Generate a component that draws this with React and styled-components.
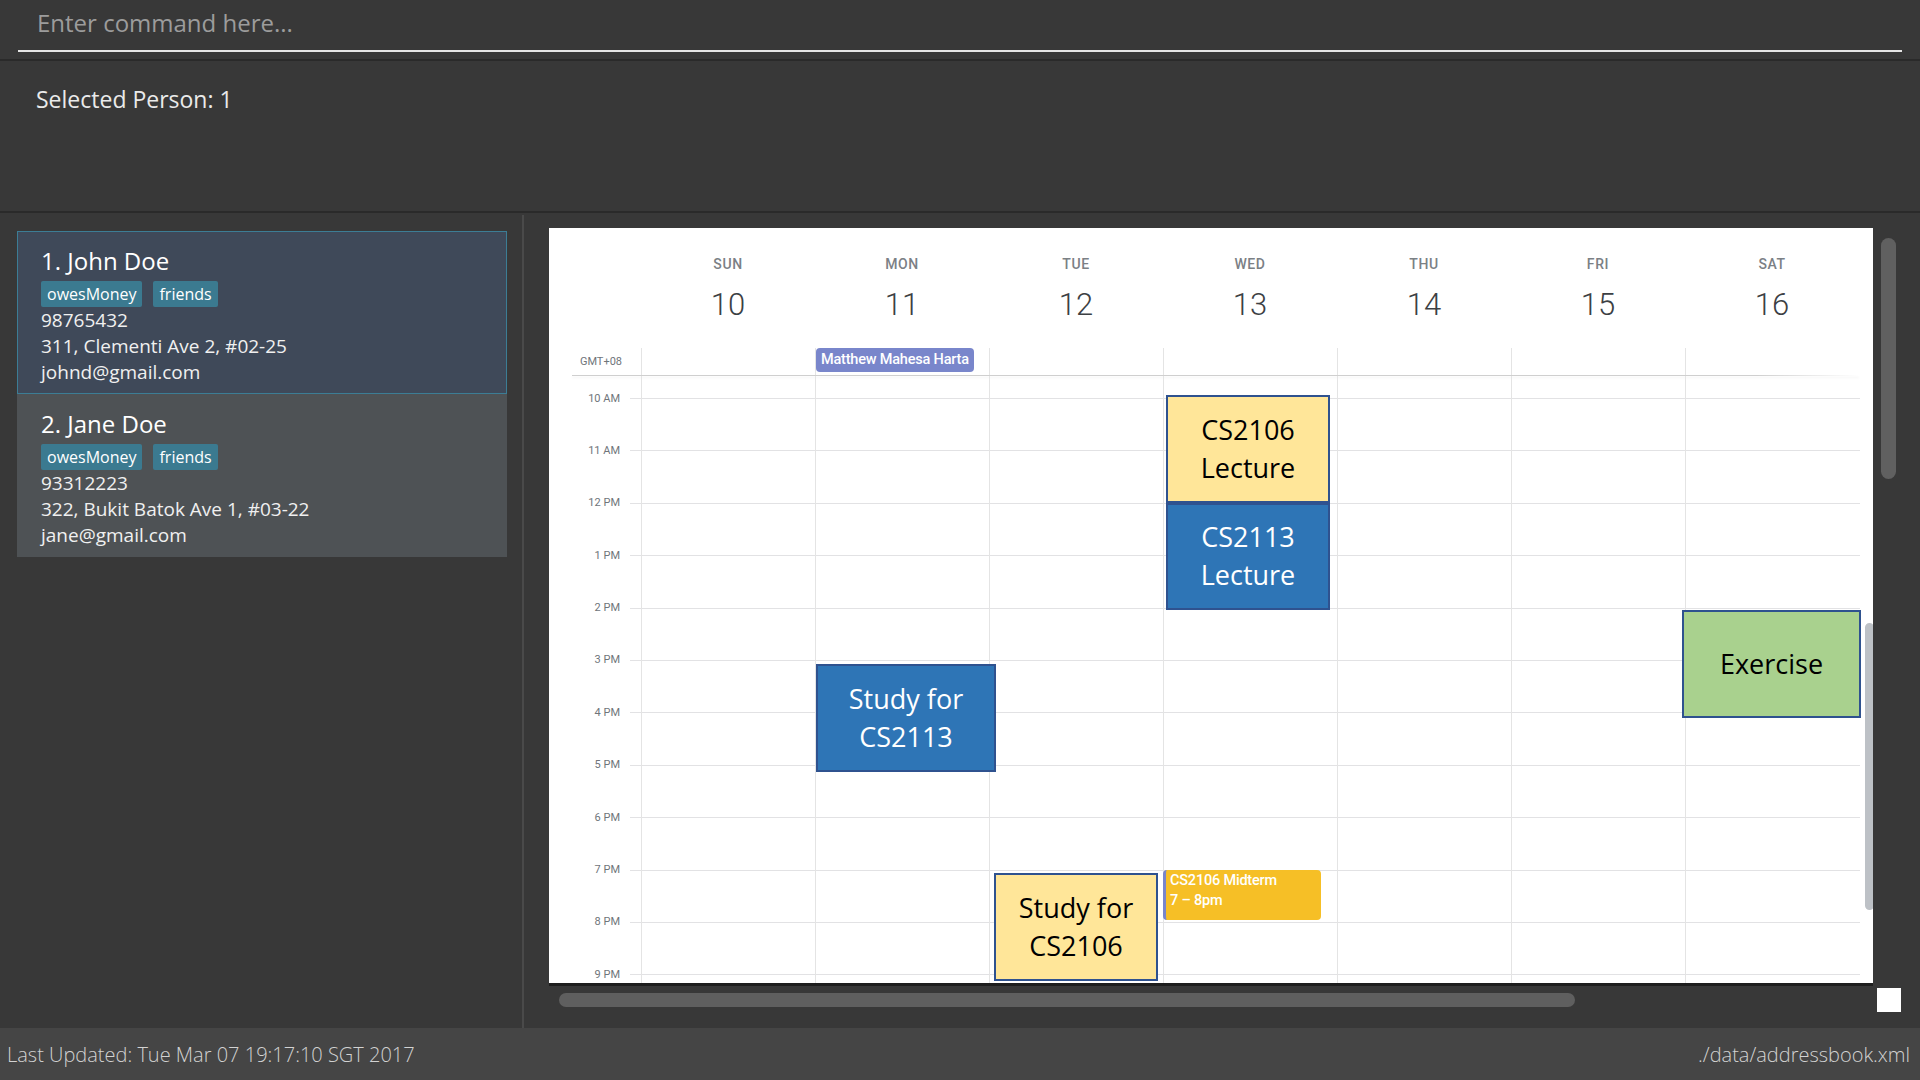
import React from 'react'
import styled, { createGlobalStyle } from 'styled-components'

const HOUR = 52.4
const FIRST_LINE = 22

const GlobalStyle = createGlobalStyle`
  body {
    margin: 0;
    background: #383838;
    font-family: "Open Sans", "Noto Sans", sans-serif;
    overflow: hidden;
  }
`

const Window = styled.div`
  display: flex;
  flex-direction: column;
  width: 1920px;
  height: 1080px;
  background: #383838;
`

const CommandBar = styled.div`
  height: 59px;
  padding: 0 18px;
  border-bottom: 2px solid #2a2a2a;
`

const CommandInput = styled.input`
  display: block;
  box-sizing: border-box;
  width: 100%;
  height: 52px;
  padding: 6px 19px 12px;
  border: none;
  border-bottom: 2px solid #e6e6e6;
  background: transparent;
  font-family: "Open Sans", sans-serif;
  font-size: 24px;
  line-height: 32px;
  color: #eee;
  outline: none;

  &::placeholder {
    color: #9c9c9c;
  }
`

const ResultBox = styled.div`
  height: 152px;
  box-sizing: border-box;
  padding: 22px 36px;
  border-bottom: 2px solid #2a2a2a;
  font-size: 23px;
  line-height: 32px;
  color: #eaeaea;
`

const Main = styled.div`
  display: flex;
  flex: 1;
  min-height: 0;
`

const PersonPane = styled.div`
  width: 524px;
  box-sizing: border-box;
  padding: 16px 16px 0 17px;
  border-right: 2px solid #4a4a4a;
  margin-top: 2px;
`

const Card = styled.div`
  width: 490px;
  box-sizing: border-box;
  padding: 13px 23px 8px;
  border: 1px solid ${(p) => (p.$selected ? '#3c7d95' : 'transparent')};
  background: ${(p) => (p.$selected ? '#3f4959' : '#4e5255')};
  color: #f2f2f2;
`

const Name = styled.div`
  font-size: 24px;
  line-height: 32px;
  color: #fff;
`

const Tags = styled.div`
  display: flex;
  gap: 11px;
  margin-top: 4px;
`

const Tag = styled.span`
  padding: 0 6px;
  border-radius: 2px;
  background: #3b7a90;
  font-size: 16px;
  line-height: 26px;
  color: #fff;
`

const Field = styled.div`
  font-size: 19px;
  line-height: 26px;
  color: #f0f0f0;
`

const CalendarPane = styled.div`
  flex: 1;
  display: grid;
  grid-template-columns: 1324px 1fr;
  grid-template-rows: 755px auto;
  padding: 15px 0 0 25px;
`

const Calendar = styled.div`
  position: relative;
  background: #fff;
  overflow: hidden;
  box-shadow: 0 3px 0 #1e1e1e;
  font-family: Roboto, "Noto Sans", sans-serif;
`

const HeaderRow = styled.div`
  display: grid;
  grid-template-columns: 92px repeat(7, 174px);
  padding-top: 28px;
`

const DayHead = styled.div`
  grid-column: ${(p) => p.$col};
  display: flex;
  flex-direction: column;
  align-items: center;
`

const DayName = styled.div`
  font-size: 14px;
  line-height: 16px;
  font-weight: 500;
  letter-spacing: 0.6px;
  color: #7b8085;
`

const DayNumber = styled.div`
  margin-top: 15px;
  font-size: 31px;
  line-height: 36px;
  font-weight: 300;
  color: #3c4043;
`

const AllDayRow = styled.div`
  display: grid;
  grid-template-columns: 92px repeat(7, 174px);
  height: 27px;
  margin-top: 25px;
`

const GmtLabel = styled.div`
  display: flex;
  align-items: center;
  justify-content: flex-end;
  padding-right: 19px;
  font-size: 11px;
  color: #70757a;
`

const AllDayCell = styled.div`
  border-left: 1px solid #e4e4e4;
`

const AllDayChip = styled.div`
  width: 158px;
  height: 24px;
  box-sizing: border-box;
  padding-left: 5px;
  border-radius: 4px;
  background: #7986cb;
  font-size: 14.5px;
  font-weight: 500;
  line-height: 24px;
  letter-spacing: -0.2px;
  color: #fff;
  white-space: nowrap;
`

const Divider = styled.div`
  height: 1px;
  margin-left: 23px;
  width: 1287px;
  background: linear-gradient(to right, #cfcfcf 0, #cfcfcf 92%, rgba(207, 207, 207, 0));
  box-shadow: 0 2px 3px rgba(0, 0, 0, 0.07);
`

const Body = styled.div`
  display: flex;
  height: 607px;
  overflow: hidden;
`

const Gutter = styled.div`
  width: 81px;
  margin-top: ${FIRST_LINE - HOUR / 2}px;
`

const TimeLabel = styled.div`
  height: ${HOUR}px;
  display: flex;
  align-items: center;
  justify-content: flex-end;
  padding-right: 10px;
  font-size: 11px;
  color: #70757a;
`

const Canvas = styled.div`
  display: grid;
  width: 1230px;
`

const HourLines = styled.div`
  grid-area: 1 / 1;
  padding-top: ${FIRST_LINE}px;
`

const HourLine = styled.div`
  height: ${HOUR}px;
  box-sizing: border-box;
  border-top: 1px solid #e2e2e4;
`

const Days = styled.div`
  grid-area: 1 / 1;
  display: grid;
  grid-template-columns: repeat(7, 174px);
  padding-left: 11px;
`

const DayColumn = styled.div`
  position: relative;
  border-left: 1px solid #e4e4e4;
`

const palette = {
  yellow: { bg: '#ffe699', fg: '#000' },
  blue: { bg: '#2e75b6', fg: '#fff' },
  green: { bg: '#a9d18e', fg: '#000' },
}

const EventBox = styled.div`
  position: absolute;
  z-index: 1;
  box-sizing: border-box;
  display: flex;
  align-items: center;
  justify-content: center;
  border: 2px solid #2f528f;
  background: ${(p) => palette[p.$kind].bg};
  color: ${(p) => palette[p.$kind].fg};
  font-family: "Open Sans", sans-serif;
  font-size: 27px;
  line-height: 38px;
  text-align: center;
`

const Chip = styled.div`
  position: absolute;
  z-index: 1;
  box-sizing: border-box;
  padding: 1px 4px;
  border-left: 3px solid #7986cb;
  border-radius: 4px;
  background: #f6bf26;
  color: #fff;
  font-size: 14.5px;
  font-weight: 500;
  line-height: 20px;
  letter-spacing: -0.2px;
`

const InnerScroll = styled.div`
  position: absolute;
  left: 1316px;
  top: 395px;
  width: 9px;
  height: 287px;
  border-radius: 5px;
  background: #bdc1c6;
`

const VScroll = styled.div`
  width: 15px;
  height: 241px;
  margin: 10px 0 0 8px;
  border-radius: 8px;
  background: #606060;
`

const HScroll = styled.div`
  width: 1016px;
  height: 14px;
  margin: 10px 0 0 10px;
  border-radius: 7px;
  background: #5f5f5f;
`

const Corner = styled.div`
  width: 24px;
  height: 24px;
  margin: 5px 0 0 4px;
  background: #fff;
`

const StatusBar = styled.div`
  display: flex;
  justify-content: space-between;
  align-items: center;
  height: 52px;
  padding: 0 10px 0 7px;
  background: #454545;
  font-size: 20px;
  font-weight: 300;
  color: #d2d2d2;
`

const persons = [
  { id: 1, name: 'John Doe', tags: ['owesMoney', 'friends'], phone: '98765432', address: '311, Clementi Ave 2, #02-25', email: 'johnd@gmail.com' },
  { id: 2, name: 'Jane Doe', tags: ['owesMoney', 'friends'], phone: '93312223', address: '322, Bukit Batok Ave 1, #03-22', email: 'jane@gmail.com' },
]

const days = [
  ['SUN', 10], ['MON', 11], ['TUE', 12], ['WED', 13], ['THU', 14], ['FRI', 15], ['SAT', 16],
]

const hours = ['10 AM', '11 AM', '12 PM', '1 PM', '2 PM', '3 PM', '4 PM', '5 PM', '6 PM', '7 PM', '8 PM', '9 PM']

// pasted boxes: day index, start hour (24h), pixel nudges
const events = [
  { day: 3, start: 10, dy: -3, h: 108, dx: 2, w: 164, kind: 'yellow', lines: ['CS2106', 'Lecture'] },
  { day: 3, start: 12, dy: 0, h: 107, dx: 2, w: 164, kind: 'blue', lines: ['CS2113', 'Lecture'] },
  { day: 1, start: 15, dy: 4, h: 108, dx: 0, w: 180, kind: 'blue', lines: ['Study for', 'CS2113'] },
  { day: 2, start: 19, dy: 3, h: 108, dx: 4, w: 164, kind: 'yellow', lines: ['Study for', 'CS2106'] },
  { day: 6, start: 14, dy: 2, h: 108, dx: -4, w: 179, kind: 'green', lines: ['Exercise'] },
]

const topFor = (start, dy) => FIRST_LINE + (start - 10) * HOUR + dy

const App = () => {
  return (
    <Window>
      <GlobalStyle />
      <CommandBar>
        <CommandInput placeholder="Enter command here..." />
      </CommandBar>
      <ResultBox>Selected Person: 1</ResultBox>

      <Main>
        <PersonPane>
          {persons.map((p) => (
            <Card key={p.id} $selected={p.id === 1}>
              <Name>{p.id}. {p.name}</Name>
              <Tags>
                {p.tags.map((t) => <Tag key={t}>{t}</Tag>)}
              </Tags>
              <Field>{p.phone}</Field>
              <Field>{p.address}</Field>
              <Field>{p.email}</Field>
            </Card>
          ))}
        </PersonPane>

        <CalendarPane>
          <Calendar>
            <HeaderRow>
              {days.map(([d, n], i) => (
                <DayHead key={d} $col={i + 2}>
                  <DayName>{d}</DayName>
                  <DayNumber>{n}</DayNumber>
                </DayHead>
              ))}
            </HeaderRow>
            <AllDayRow>
              <GmtLabel>GMT+08</GmtLabel>
              {days.map(([d], i) => (
                <AllDayCell key={d}>
                  {i === 1 && <AllDayChip>Matthew Mahesa Harta</AllDayChip>}
                </AllDayCell>
              ))}
            </AllDayRow>
            <Divider />
            <Body>
              <Gutter>
                {hours.map((h) => <TimeLabel key={h}>{h}</TimeLabel>)}
              </Gutter>
              <Canvas>
                <HourLines>
                  {hours.map((h) => <HourLine key={h} />)}
                </HourLines>
                <Days>
                  {days.map(([d], i) => (
                    <DayColumn key={d}>
                      {events.filter((e) => e.day === i).map((e) => (
                        <EventBox
                          key={e.lines.join()}
                          $kind={e.kind}
                          style={{ top: topFor(e.start, e.dy), left: e.dx, width: e.w, height: e.h }}
                        >
                          <div>{e.lines.map((l) => <div key={l}>{l}</div>)}</div>
                        </EventBox>
                      ))}
                      {i === 3 && (
                        <Chip style={{ top: topFor(19, 0), left: -1, width: 158, height: 50 }}>
                          <div>CS2106 Midterm</div>
                          <div>7 – 8pm</div>
                        </Chip>
                      )}
                    </DayColumn>
                  ))}
                </Days>
              </Canvas>
            </Body>
            <InnerScroll />
          </Calendar>
          <div><VScroll /></div>
          <div><HScroll /></div>
          <div><Corner /></div>
        </CalendarPane>
      </Main>

      <StatusBar>
        <span>Last Updated: Tue Mar 07 19:17:10 SGT 2017</span>
        <span>./data/addressbook.xml</span>
      </StatusBar>
    </Window>
  )
}

export default App
